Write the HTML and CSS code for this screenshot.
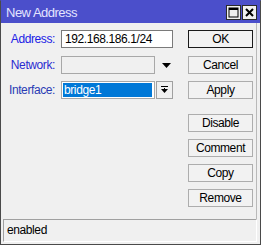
FILE: index.html
```html
<!DOCTYPE html>
<html>
<head>
<meta charset="utf-8">
<title>New Address</title>
<link rel="stylesheet" href="styles.css">
</head>
<body>
<div class="window">
  <div class="titlebar">
    <span class="title">New Address</span>
    <div class="tb-buttons">
      <span class="tb-btn">
        <svg width="13" height="13" viewBox="0 0 13 13"><rect x="2" y="2" width="9" height="9" fill="none" stroke="#000" stroke-width="1"/><rect x="2" y="2" width="9" height="2" fill="#000"/></svg>
      </span>
      <span class="tb-btn">
        <svg width="13" height="13" viewBox="0 0 13 13"><path d="M3 3 L10 10 M10 3 L3 10" stroke="#000" stroke-width="2"/></svg>
      </span>
    </div>
  </div>
  <div class="main">
    <div class="form">
      <div class="row r1">
        <label class="lbl lbl-addr">Address:</label>
        <div class="field field-wide input-white">192.168.186.1/24</div>
      </div>
      <div class="row r2">
        <label class="lbl lbl-net">Network:</label>
        <div class="field field-narrow input-disabled"></div>
        <svg class="arrow" width="9" height="5" viewBox="0 0 9 5"><path d="M0 0 H9 L4.5 5 Z" fill="#000"/></svg>
      </div>
      <div class="row r3">
        <label class="lbl lbl-if">Interface:</label>
        <div class="field field-narrow input-select"><span class="sel">bridge1</span></div>
        <span class="dd-btn">
          <svg width="7" height="8" viewBox="0 0 7 8"><rect x="0" y="0" width="7" height="1" fill="#000"/><rect x="3" y="2" width="1" height="2" fill="#000"/><path d="M0 3 H7 L3.5 7 Z" fill="#000"/></svg>
        </span>
      </div>
    </div>
    <div class="buttons">
      <div class="btn btn-default">OK</div>
      <div class="btn b-cancel">Cancel</div>
      <div class="btn">Apply</div>
      <div class="btn b-disable">Disable</div>
      <div class="btn">Comment</div>
      <div class="btn">Copy</div>
      <div class="btn">Remove</div>
    </div>
  </div>
  <div class="status">enabled</div>
</div>
</body>
</html>
```
FILE: styles.css
```css
* { box-sizing: border-box; }
html, body { margin: 0; padding: 0; background: #f0f0f0; }
body {
  font-family: "Liberation Sans", Arial, sans-serif;
  font-size: 12px;
  letter-spacing: -0.4px;
  color: #000;
}
.window {
  width: 261px;
  height: 245px;
  border: 1px solid #4a4a4a;
  border-top-color: #4b4fcb;
  background: #f0f0f0;
  display: flex;
  flex-direction: column;
}
.titlebar {
  height: 22px;
  background: #4b4fcb;
  display: flex;
  align-items: center;
  padding-left: 5px;
  padding-right: 3px;
  flex-shrink: 0;
}
.title {
  color: #e4e4ff;
  font-size: 13px;
  letter-spacing: -0.5px;
  flex: 1;
}
.tb-buttons { display: flex; gap: 1px; }
.tb-btn {
  width: 15px;
  height: 15px;
  background: #f0f0f0;
  border: 1px solid #2a2a2a;
  display: flex;
  align-items: center;
  justify-content: center;
}
.tb-btn svg { display: block; }
.main {
  flex: 1;
  display: flex;
  padding-top: 7px;
  margin-right: 3px;
  border-right: 1px solid #b9b9b9;
}
.form {
  width: 186px;
  display: flex;
  flex-direction: column;
}
.row {
  display: flex;
  align-items: center;
  height: 18px;
}
.r2 { margin-top: 8px; }
.r3 { margin-top: 7px; }
.lbl {
  width: 54px;
  text-align: right;
  margin-right: 6px;
  white-space: nowrap;
}
.lbl-addr { color: #2020e6; }
.lbl-net { color: #2b2bd0; }
.lbl-if { color: #2a3bb4; }
.field {
  height: 18px;
  border: 1px solid #a0a0a0;
  line-height: 16px;
  white-space: nowrap;
  overflow: hidden;
}
.field-wide { width: 112px; }
.field-narrow { width: 94px; }
.input-white {
  background: #fff;
  border-color: #7a7a7a;
  padding-left: 3px;
}
.input-disabled { background: #f0f0f0; border-color: #a8a8a8; }
.input-select {
  background: #fff;
  border-color: #a8a8a8;
  padding: 1px 2px 1px 1px;
}
.sel {
  display: block;
  height: 14px;
  line-height: 14px;
  background: #0078d7;
  color: #fff;
  padding-left: 1px;
}
.arrow { margin-left: 7px; display: block; }
.dd-btn {
  width: 17px;
  height: 18px;
  margin-left: 1px;
  border: 1px solid #a0a0a0;
  background: #f0f0f0;
  display: flex;
  align-items: center;
  justify-content: center;
}
.dd-btn svg { display: block; }
.buttons {
  display: flex;
  flex-direction: column;
  gap: 7px;
  margin-left: 1px;
}
.btn {
  width: 65px;
  height: 18px;
  border: 1px solid #adadad;
  background: #f2f2f2;
  text-align: center;
  line-height: 16px;
}
.btn-default { border-color: #1a1a1a; }
.b-cancel { margin-top: 1px; }
.b-disable { margin-top: 8px; }
.status {
  height: 23px;
  margin: 0 3px 2px 2px;
  border: 1px solid #a0a0a0;
  border-right-color: #fff;
  border-bottom-color: #fff;
  padding-left: 3px;
  line-height: 20px;
  flex-shrink: 0;
}
```
